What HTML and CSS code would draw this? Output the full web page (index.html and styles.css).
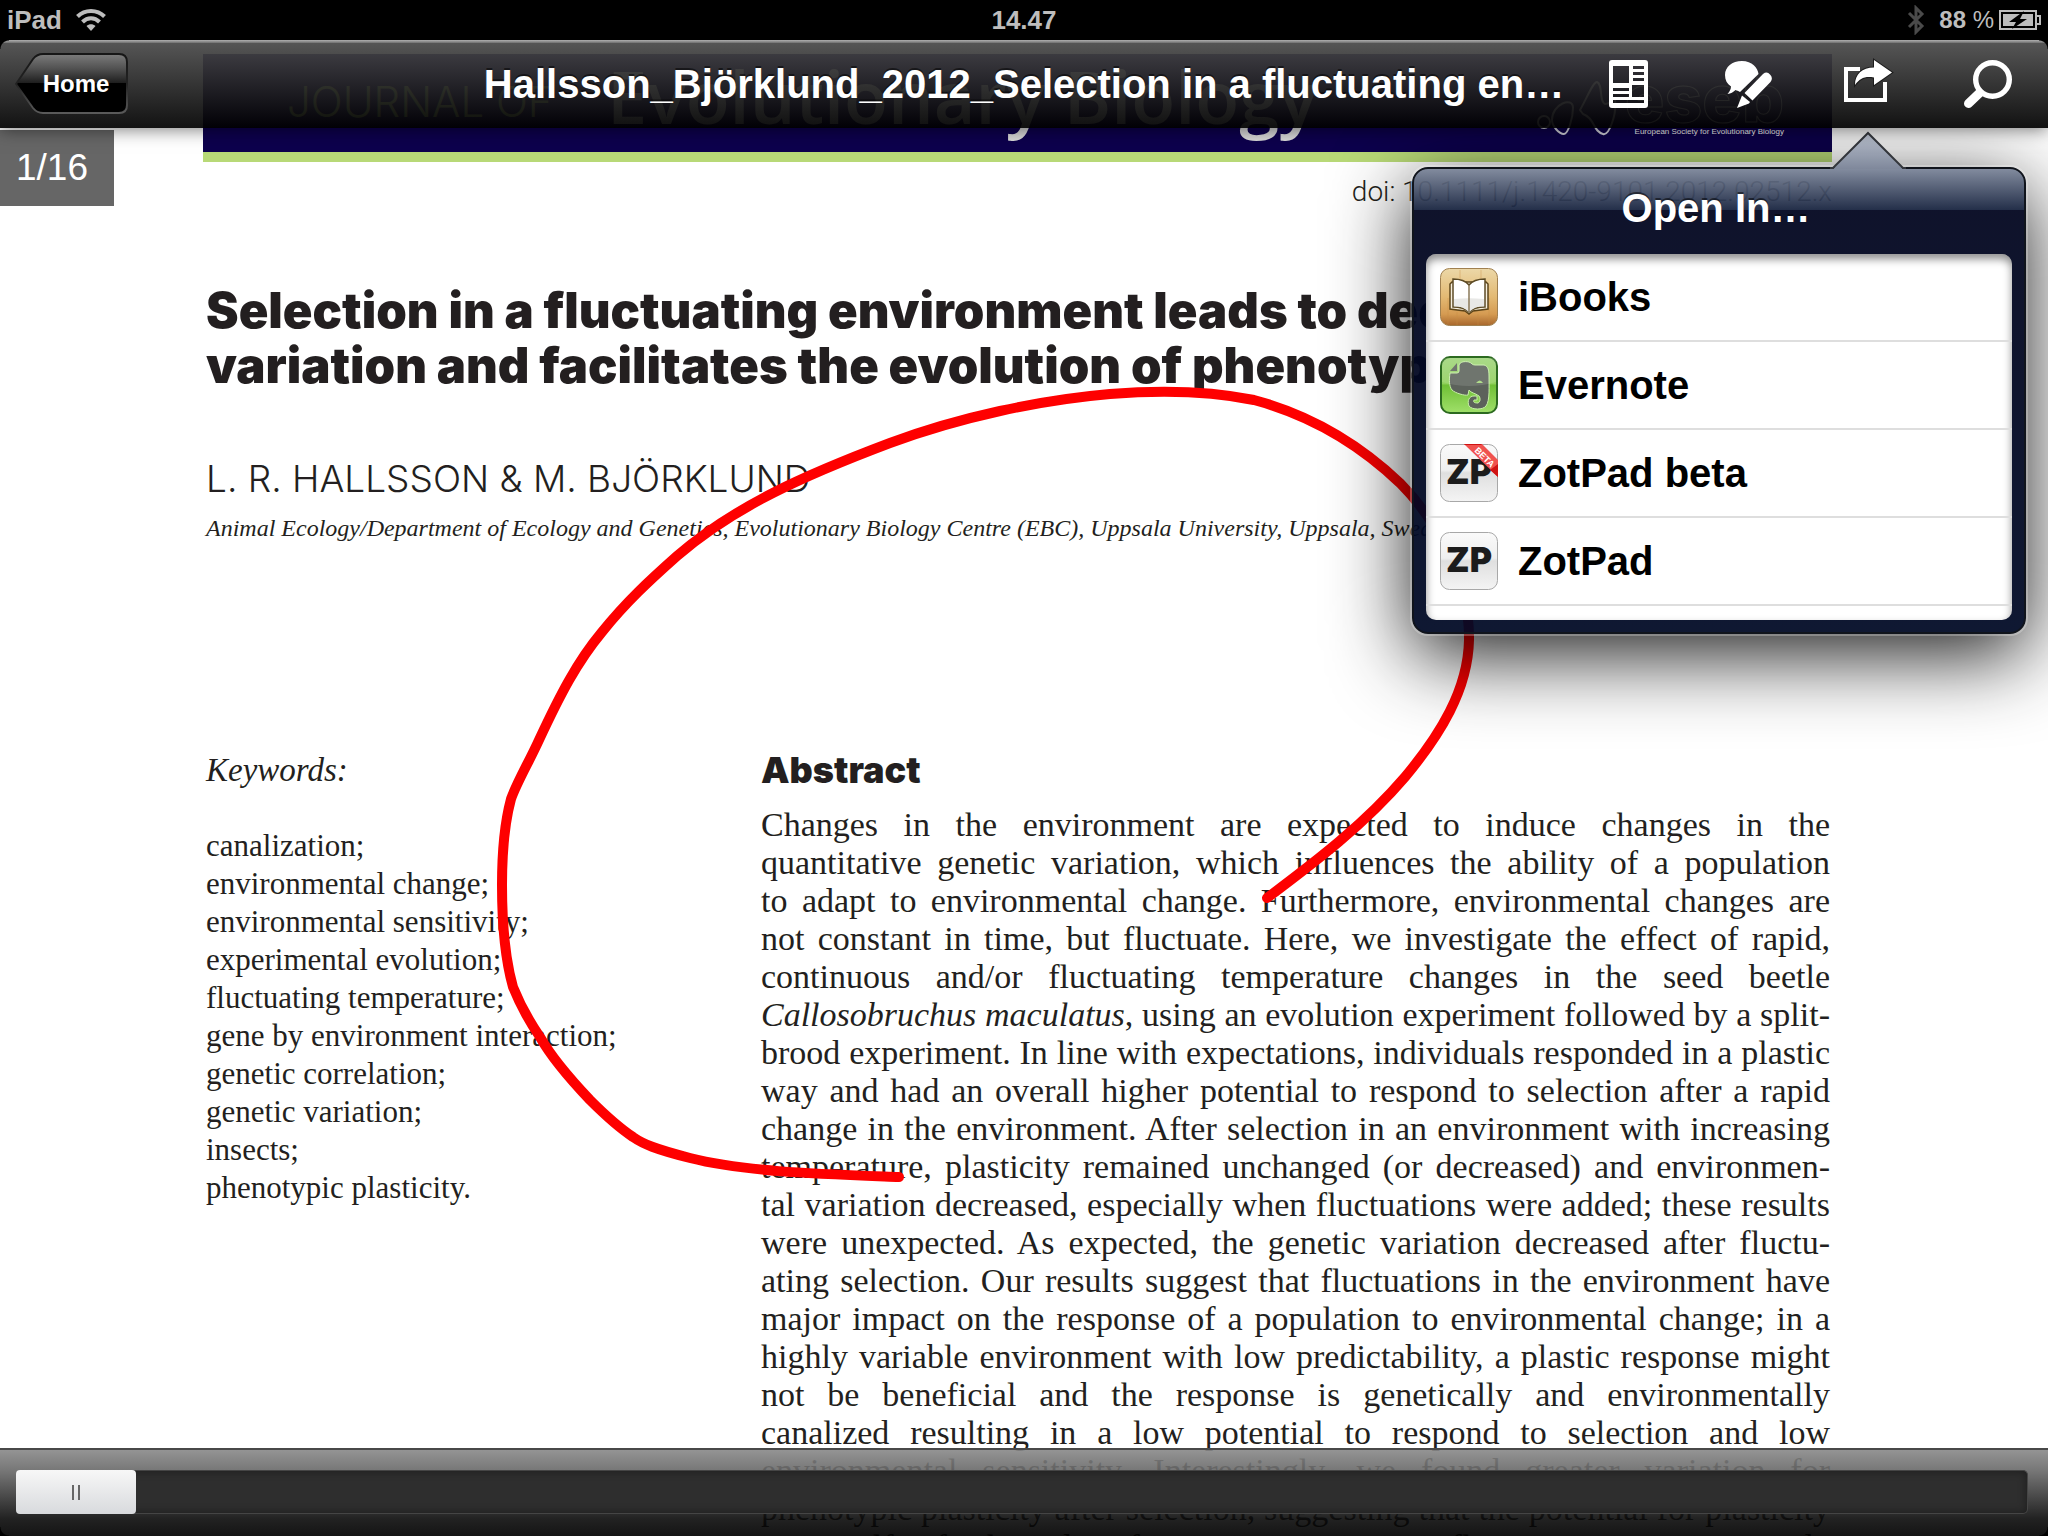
FILE: index.html
```html
<!DOCTYPE html>
<html lang="en">
<head>
<meta charset="utf-8">
<title>Hallsson_Björklund_2012_Selection in a fluctuating environment</title>
<link rel="stylesheet" href="styles.css">
</head>
<body>
<div class="app">

  <main class="document">
    <article class="page">
      <div class="banner">
        <span class="banner-prefix">JOURNAL OF</span>
        <span class="banner-name">Evolutionary Biology</span>
        <div class="society">
          <svg class="society-mark" viewBox="0 0 80 64" aria-hidden="true">
            <g fill="none" stroke="#dcdce6" stroke-width="2">
              <circle cx="7" cy="48" r="6"/>
              <path d="M15 46C15 30 36 22 36 34C36 44 31 60 27 60C22 60 15 52 15 46Z"/>
              <path d="M43 36C50 24 56 8 60 8C66 10 62 28 68 30C74 30 78 22 78 26C80 40 72 62 66 60C56 58 58 44 46 40Z"/>
            </g>
          </svg>
          <div class="society-text">
            <span class="society-acronym">eseb</span>
            <span class="society-name">European Society for Evolutionary Biology</span>
          </div>
        </div>
      </div>

      <p class="doi">doi: 10.1111/j.1420-9101.2012.02512.x</p>

      <h1 class="paper-title">Selection in a fluctuating environment leads to decreased<br>variation and facilitates the evolution of phenotypic</h1>
      <p class="authors">L. R. HALLSSON &amp; M. BJÖRKLUND</p>
      <p class="affiliation">Animal Ecology/Department of Ecology and Genetics, Evolutionary Biology Centre (EBC), Uppsala University, Uppsala, Sweden</p>

      <div class="columns">
        <section>
          <h2 class="keywords-heading">Keywords:</h2>
          <ul class="keywords">
            <li>canalization;</li>
            <li>environmental change;</li>
            <li>environmental sensitivity;</li>
            <li>experimental evolution;</li>
            <li>fluctuating temperature;</li>
            <li>gene by environment interaction;</li>
            <li>genetic correlation;</li>
            <li>genetic variation;</li>
            <li>insects;</li>
            <li>phenotypic plasticity.</li>
          </ul>
        </section>
        <section>
          <h2 class="abstract-heading">Abstract</h2>
          <p class="abstract">
            <span>Changes in the environment are expected to induce changes in the</span>
            <span>quantitative genetic variation, which influences the ability of a population</span>
            <span>to adapt to environmental change. Furthermore, environmental changes are</span>
            <span>not constant in time, but fluctuate. Here, we investigate the effect of rapid,</span>
            <span>continuous and/or fluctuating temperature changes in the seed beetle</span>
            <span><i>Callosobruchus maculatus</i>, using an evolution experiment followed by a split-</span>
            <span>brood experiment. In line with expectations, individuals responded in a plastic</span>
            <span>way and had an overall higher potential to respond to selection after a rapid</span>
            <span>change in the environment. After selection in an environment with increasing</span>
            <span>temperature, plasticity remained unchanged (or decreased) and environmen-</span>
            <span>tal variation decreased, especially when fluctuations were added; these results</span>
            <span>were unexpected. As expected, the genetic variation decreased after fluctu-</span>
            <span>ating selection. Our results suggest that fluctuations in the environment have</span>
            <span>major impact on the response of a population to environmental change; in a</span>
            <span>highly variable environment with low predictability, a plastic response might</span>
            <span>not be beneficial and the response is genetically and environmentally</span>
            <span>canalized resulting in a low potential to respond to selection and low</span>
            <span>environmental sensitivity. Interestingly, we found greater variation for</span>
            <span>phenotypic plasticity after selection, suggesting that the potential for plasticity</span>
            <span>is itself facilitated after exposure to fluctuations. Our study</span>
          </p>
        </section>
      </div>
    </article>

    <svg class="ink" aria-hidden="true">
      <path d="M899 1177C820 1174 745 1172 690 1158C655 1149 643 1144 633 1137C618 1127 604 1114 590 1100C572 1081 553 1060 540 1037C527 1018 519 1002 513 987C504 955 502 920 502 885C502 855 504 825 511 799C517 782 529 762 539 740C560 695 577 662 602 632C626 602 650 580 677 556C735 506 805 475 890 443C960 417 1040 400 1110 394C1160 390 1210 391 1254 400C1310 415 1360 445 1400 483C1435 518 1470 580 1469 640C1468 690 1440 735 1405 777C1365 824 1315 862 1267 898" fill="none" stroke="#fe0000" stroke-width="10" stroke-linecap="round"/>
    </svg>
  </main>

  <div class="page-count">1/16</div>

  <header class="chrome">
    <div class="status">
      <div class="status-side">
        <span>iPad</span>
        <svg width="30" height="24" viewBox="0 0 30 24" aria-hidden="true">
          <g fill="none" stroke="#bdbdbd" stroke-width="4">
            <path d="M1.500 8.500C9 1 21 1 28.500 8.500"/>
            <path d="M6.500 14C11.500 9 18.500 9 23.500 14"/>
          </g>
          <path d="M10.500 18C13 15.500 17 15.500 19.500 18L15 23Z" fill="#bdbdbd"/>
        </svg>
      </div>
      <span>14.47</span>
      <div class="status-side status-right">
        <svg width="18" height="30" viewBox="0 0 18 30" aria-hidden="true">
          <path d="M2 8L15 21L9 27V3L15 9L2 22" fill="none" stroke="#4a4a4a" stroke-width="3"/>
        </svg>
        <span class="charge">88 <span class="percent">%</span></span>
        <svg width="42" height="20" viewBox="0 0 42 20" aria-hidden="true">
          <rect x="1" y="1" width="36" height="18" fill="none" stroke="#bdbdbd" stroke-width="2"/>
          <path d="M38 6H41V14H38" fill="none" stroke="#bdbdbd" stroke-width="2"/>
          <rect x="4" y="4" width="30" height="12" fill="#bdbdbd"/>
          <path d="M25 1L10 12H17L13 19L28 9H21Z" fill="#000"/>
        </svg>
      </div>
    </div>

    <div class="toolbar">
      <div class="toolbar-left">
        <button class="home" type="button">
          <svg class="home-shape" viewBox="0 0 114 64" aria-hidden="true">
            <defs>
              <linearGradient id="homeFill" x1="0" y1="0" x2="0" y2="1">
                <stop offset="0" stop-color="#7c7c7c"/>
                <stop offset=".25" stop-color="#515151"/>
                <stop offset=".5" stop-color="#1c1c1c"/>
                <stop offset=".5" stop-color="#000"/>
                <stop offset="1" stop-color="#000"/>
              </linearGradient>
              <linearGradient id="homeEdge" x1="0" y1="0" x2="0" y2="1">
                <stop offset="0" stop-color="#161616"/>
                <stop offset=".5" stop-color="#222"/>
                <stop offset="1" stop-color="#5a5a5a"/>
              </linearGradient>
            </defs>
            <path d="M1 32L18 7Q22 2 28 2H104Q112 2 112 10V53Q112 61 104 61H28Q22 61 18 56Z" fill="url(#homeFill)" stroke="url(#homeEdge)" stroke-width="2"/>
          </svg>
          <span class="home-label">Home</span>
        </button>
      </div>
      <div class="toolbar-title">Hallsson_Björklund_2012_Selection in a fluctuating en…</div>
      <div class="toolbar-actions">
        <button class="tool" type="button" aria-label="Contents">
          <svg viewBox="0 0 48 48" aria-hidden="true">
            <path fill="#fff" fill-rule="evenodd" d="M8 0H41Q44 0 44 3V45Q44 48 41 48H8Q5 48 5 45V3Q5 0 8 0ZM9 6V23H25V6ZM29 6V9H40V6ZM29 12V15H40V12ZM29 18V21H40V18ZM28 25V37H40V25ZM9 28V31H25V28ZM9 34V37H25V34ZM9 40V43H40V40Z"/>
          </svg>
        </button>
        <button class="tool" type="button" aria-label="Annotate">
          <svg viewBox="0 0 48 48" aria-hidden="true">
            <path fill="#fff" d="M18 1C28 1 34 8 34.500 14L16 32C14 31 13 30.500 11.500 30C9 32.500 7 33.500 3.500 34C6 31 7 29 7 26.500C3 24 1 20 1 15C1 7 8 1 18 1Z"/>
            <path fill="#fff" d="M20.500 33L39 14Q43 11 46 14.500Q49.500 18 46.500 22L28.500 40.500Z"/>
            <path fill="#fff" d="M18 35.500L26 42L25 43.500L13 48L15 43Z"/>
          </svg>
        </button>
        <button class="tool" type="button" aria-label="Share">
          <svg viewBox="0 0 48 48" aria-hidden="true">
            <path fill="none" stroke="#fff" stroke-width="4" d="M16 9H2V40H41V22"/>
            <path fill="#fff" stroke="#1c1c1c" stroke-width="2" paint-order="stroke" d="M30 0L48 12.500L30 25V17.500C21 16 16 18 11 25C11 14 18 7.500 30 7.500Z"/>
          </svg>
        </button>
        <button class="tool" type="button" aria-label="Search">
          <svg viewBox="0 0 48 48" aria-hidden="true">
            <circle cx="28.500" cy="19.500" r="16.800" fill="none" stroke="#fff" stroke-width="5.400"/>
            <path d="M15.500 33L4.500 43.500" stroke="#fff" stroke-width="9" stroke-linecap="round"/>
          </svg>
        </button>
      </div>
    </div>
  </header>

  <aside class="popover" aria-labelledby="popover-title">
    <svg class="popover-arrow" viewBox="0 0 76 38" aria-hidden="true">
      <defs>
        <linearGradient id="arrowFill" x1="0" y1="0" x2="0" y2="1">
          <stop offset="0" stop-color="#b9c0cd"/>
          <stop offset="1" stop-color="#7f889b"/>
        </linearGradient>
      </defs>
      <path d="M3 38L38 2L73 38Z" fill="url(#arrowFill)"/>
      <path d="M0 37H3L38 2L73 37H76" fill="none" stroke="#33363c" stroke-width="2"/>
    </svg>
    <h2 class="popover-title" id="popover-title">Open In…</h2>
    <ul class="apps">
      <li>
        <button class="app-row" type="button">
          <svg class="app-icon" viewBox="0 0 58 58" aria-hidden="true">
            <defs>
              <linearGradient id="wood" x1="0" y1="0" x2="0" y2="1">
                <stop offset="0" stop-color="#ecd8a8"/>
                <stop offset=".5" stop-color="#e3b973"/>
                <stop offset=".8" stop-color="#d59b52"/>
                <stop offset="1" stop-color="#a8672c"/>
              </linearGradient>
            </defs>
            <rect x=".5" y=".5" width="57" height="57" rx="9" fill="url(#wood)" stroke="#a08050"/>
            <path d="M8 30V56M17 44V57M38 46V57M49 30V56M20 2V12M41 2V12" stroke="#c98c42" stroke-opacity=".4"/>
            <path d="M12 14L10 16V41L25 43L29 46L33 43L48 41V16L46 14Z" fill="#f6efdf" stroke="#5c4418" stroke-width="1.500"/>
            <path d="M29 17C25 12 19 11 13 11V39C20 39 25 40 29 44C33 40 38 39 45 39V11C39 11 33 12 29 17Z" fill="#fff" stroke="#5c4a24" stroke-width="1.500"/>
            <path d="M29 44C25 40 20 38 14 38V31C24 30 34 30 44 31V38C38 38 33 40 29 44" fill="#e8e8e6"/>
            <path d="M29 17V44" stroke="#8a7858" stroke-width="1.500"/>
          </svg>
          <span>iBooks</span>
        </button>
      </li>
      <li>
        <button class="app-row" type="button">
          <svg class="app-icon" viewBox="0 0 58 58" aria-hidden="true">
            <defs>
              <linearGradient id="leaf" x1="0" y1="0" x2="0" y2="1">
                <stop offset="0" stop-color="#9fd47a"/>
                <stop offset=".48" stop-color="#8fd05a"/>
                <stop offset=".5" stop-color="#6fbf35"/>
                <stop offset="1" stop-color="#a0e06a"/>
              </linearGradient>
            </defs>
            <rect x="1" y="1" width="56" height="56" rx="9" fill="url(#leaf)" stroke="#2c6a20" stroke-width="2"/>
            <path d="M19 9C20 6 24 5 29 6C32 7 32 9 35 9H44C48 10 49 14 49 20C49 30 50 45 46 50C43 54 32 54 29 50C27 45 29 40 34 40H37V44H34C33 46 34 47 38 47C40 46 41 43 39 40C35 37 31 37 29 34L28 39C25 40 15 37 12 34C9 30 9 24 10 17H17Q19 17 19 15Z" fill="#5c625b" stroke="#c7efa8" stroke-width="1"/>
            <path d="M17 7L10 15H17Z" fill="#5c625b"/>
            <path d="M36 27Q40 22 43 27Z" fill="#a6d97c"/>
            <path d="M2 2H56V26Q29 34 2 26Z" fill="#fff" fill-opacity=".12"/>
          </svg>
          <span>Evernote</span>
        </button>
      </li>
      <li>
        <button class="app-row" type="button">
          <svg class="app-icon" viewBox="0 0 58 58" aria-hidden="true">
            <defs>
              <linearGradient id="silver" x1="0" y1="0" x2="0" y2="1">
                <stop offset="0" stop-color="#fafafa"/>
                <stop offset=".45" stop-color="#efefef"/>
                <stop offset=".5" stop-color="#dfdfdf"/>
                <stop offset="1" stop-color="#f4f4f4"/>
              </linearGradient>
              <clipPath id="tile"><rect width="58" height="58" rx="9"/></clipPath>
            </defs>
            <rect x=".5" y=".5" width="57" height="57" rx="9" fill="url(#silver)" stroke="#a8a8a8"/>
            <text class="zp" x="29" y="40" text-anchor="middle">ZP</text>
            <g clip-path="url(#tile)">
              <path d="M24 0H42L58 16V33Z" fill="#f0524f"/>
              <path d="M24 0H41L42 1H25ZM50 26L58 20V33Z" fill="#d01212"/>
              <text class="beta" transform="translate(34 7) rotate(45)">BETA</text>
            </g>
          </svg>
          <span>ZotPad beta</span>
        </button>
      </li>
      <li>
        <button class="app-row" type="button">
          <svg class="app-icon" viewBox="0 0 58 58" aria-hidden="true">
            <rect x=".5" y=".5" width="57" height="57" rx="9" fill="url(#silver)" stroke="#a8a8a8"/>
            <text class="zp" x="29" y="40" text-anchor="middle">ZP</text>
          </svg>
          <span>ZotPad</span>
        </button>
      </li>
    </ul>
  </aside>

  <footer class="scrubber">
    <input class="scrubber-range" type="range" min="1" max="16" value="1" aria-label="Page">
  </footer>
</div>
</body>
</html>
```

FILE: styles.css
```css
* {
  box-sizing: border-box;
}

body,
h1,
h2,
p,
ul {
  margin: 0;
  padding: 0;
}

ul {
  list-style: none;
}

button {
  margin: 0;
  padding: 0;
  border: 0;
  background: none;
  font: inherit;
  color: inherit;
}

body {
  font-family: "Liberation Sans", Arial, sans-serif;
  background: #fff;
}

.app {
  position: relative;
  height: 100vh;
  overflow: hidden;
}

/* Document */

.document {
  padding: 54px 216px 0 203px;
  color: #231f20;
  background: #fff;
}

.banner {
  display: flex;
  align-items: flex-end;
  height: 108px;
  padding-left: 84px;
  background: #0d004d;
  border-bottom: 10px solid #b8d977;
  white-space: nowrap;
}

.banner-prefix {
  width: 320px;
  padding-bottom: 18px;
  font-family: Inter, sans-serif;
  font-size: 42px;
  font-weight: 300;
  line-height: 64px;
  color: #a9c76e;
}

.banner-name {
  flex: 1;
  align-self: flex-start;
  font-family: "Open Sans", sans-serif;
  font-size: 72px;
  font-weight: 600;
  line-height: 84px;
  color: #d8d8d8;
}

.society {
  display: flex;
  align-items: flex-end;
  gap: 8px;
  padding-right: 48px;
  padding-bottom: 14px;
}

.society-mark {
  width: 80px;
  height: 64px;
}

.society-text {
  display: flex;
  flex-direction: column;
  align-items: flex-end;
}

.society-acronym {
  font-family: Inter, sans-serif;
  font-size: 66px;
  font-weight: 800;
  line-height: 56px;
  color: transparent;
  -webkit-text-stroke: 1px #dcdce6;
}

.society-name {
  font-family: "Liberation Sans", sans-serif;
  font-size: 8px;
  line-height: 12px;
  color: #fff;
}

.doi {
  margin-top: 14px;
  font-family: Roboto, sans-serif;
  font-size: 28px;
  font-weight: 300;
  line-height: 32px;
  text-align: right;
}

.paper-title {
  margin: 75px 0 0 3px;
  font-family: Inter, sans-serif;
  font-size: 49px;
  font-weight: 900;
  line-height: 55px;
  white-space: nowrap;
}

.authors {
  margin: 66px 0 0 3px;
  font-family: Inter, sans-serif;
  font-size: 37px;
  font-weight: 300;
  line-height: 40px;
}

.affiliation {
  margin: 14px 0 0 3px;
  font-family: "Liberation Serif", serif;
  font-size: 24px;
  font-style: italic;
  line-height: 30px;
  white-space: nowrap;
}

.columns {
  display: grid;
  grid-template-columns: 555px 1fr;
  margin: 207px 2px 0 3px;
  font-family: "Liberation Serif", serif;
}

.keywords-heading {
  font-size: 33px;
  font-weight: 400;
  font-style: italic;
  line-height: 40px;
}

.keywords {
  margin-top: 37px;
  font-size: 31px;
  line-height: 38px;
}

.abstract-heading {
  font-family: Inter, sans-serif;
  font-size: 36px;
  font-weight: 900;
  line-height: 40px;
}

.abstract {
  margin-top: 16px;
  font-size: 34px;
  line-height: 38px;
}

.abstract > span {
  display: block;
  white-space: nowrap;
  text-align: justify;
  text-align-last: justify;
}

.ink {
  position: absolute;
  top: 0;
  left: 0;
  width: 100%;
  height: 100%;
  pointer-events: none;
}

.page-count {
  position: absolute;
  top: 130px;
  left: 0;
  width: 114px;
  padding-left: 16px;
  background: #666;
  color: #fff;
  font-size: 37px;
  line-height: 76px;
}

/* Status bar and toolbar */

.chrome {
  position: absolute;
  top: 0;
  left: 0;
  right: 0;
  z-index: 2;
}

.status {
  display: grid;
  grid-template-columns: 1fr auto 1fr;
  align-items: center;
  height: 40px;
  padding: 0 7px;
  background: #000;
  color: #bdbdbd;
  font-size: 26px;
  font-weight: 700;
  line-height: 38px;
}

.status-side {
  display: flex;
  align-items: center;
  gap: 14px;
}

.status-right {
  justify-content: flex-end;
}

.charge {
  margin-right: -9px;
  font-size: 24px;
}

.percent {
  font-weight: 400;
}

.toolbar {
  display: grid;
  grid-template-columns: 1fr auto 1fr;
  align-items: center;
  height: 88px;
  background:
    radial-gradient(circle at 9px 9px, transparent 8px, #000 9px) 0 0 / 9px 9px no-repeat,
    radial-gradient(circle at 0 9px, transparent 8px, #000 9px) 100% 0 / 9px 9px no-repeat,
    linear-gradient(#b0b0b0, #707070) 0 0 / 100% 3px no-repeat,
    linear-gradient(rgba(75, 75, 75, .93), rgba(0, 0, 0, .93));
  box-shadow: 0 2px 16px rgba(0, 0, 0, .5);
  color: #fff;
  font-weight: 700;
}

.toolbar-left {
  padding-left: 15px;
}

.home {
  position: relative;
  display: block;
  width: 114px;
  height: 64px;
  padding-left: 8px;
  font-size: 24px;
  line-height: 64px;
  text-align: center;
}

.home-shape {
  position: absolute;
  inset: 0;
}

.home-label {
  position: relative;
}

.toolbar-title {
  font-size: 40px;
  line-height: 88px;
  white-space: nowrap;
  text-shadow: 0 -2px 0 rgba(0, 0, 0, .5);
}

.toolbar-actions {
  display: flex;
  justify-content: flex-end;
}

.tool {
  display: grid;
  place-items: center;
  width: 120px;
  height: 88px;
}

.tool svg {
  width: 48px;
  height: 48px;
  overflow: visible;
}

/* Open In popover */

.popover {
  position: absolute;
  top: 167px;
  right: 22px;
  z-index: 1;
  width: 614px;
  padding: 0 12px 12px;
  border: 2px solid #10141c;
  border-radius: 16px;
  background:
    linear-gradient(rgba(122, 132, 152, .94), rgba(22, 34, 62, .94)) 0 0 / 100% 41px no-repeat,
    linear-gradient(rgba(0, 4, 30, .94), rgba(0, 10, 38, .94)) 0 41px no-repeat;
  box-shadow:
    0 0 0 2px rgba(255, 255, 255, .25),
    0 20px 80px rgba(0, 0, 0, .9);
}

.popover-arrow {
  position: absolute;
  top: -38px;
  right: 118px;
  width: 76px;
  height: 38px;
}

.popover-title {
  height: 85px;
  padding-right: 6px;
  color: #fff;
  font-size: 40px;
  line-height: 78px;
  text-align: center;
  text-shadow: 0 -2px 0 rgba(0, 0, 0, .5);
}

.apps {
  height: 366px;
  overflow: hidden;
  border-radius: 10px;
  background: #fff;
  box-shadow: inset 0 5px 8px rgba(0, 0, 0, .45);
}

.app-row {
  display: flex;
  align-items: center;
  gap: 20px;
  width: 100%;
  height: 88px;
  padding: 0 14px;
  border-bottom: 2px solid #dedede;
  color: #000;
  font-size: 40px;
  font-weight: 700;
}

.app-icon {
  width: 58px;
  height: 58px;
}

.zp {
  font-family: Inter, sans-serif;
  font-size: 34px;
  font-weight: 900;
  fill: #1c1c1c;
}

.beta {
  font-family: "Liberation Sans", sans-serif;
  font-size: 9px;
  font-weight: 700;
  fill: #fff;
}

/* Page scrubber */

.scrubber {
  position: absolute;
  left: 0;
  right: 0;
  bottom: 0;
  z-index: 2;
  height: 88px;
  padding: 22px 20px 0 16px;
  border-top: 2px solid #484848;
  background:
    radial-gradient(circle at 9px 0, transparent 8px, #000 9px) 0 100% / 9px 9px no-repeat,
    radial-gradient(circle at 0 0, transparent 8px, #000 9px) 100% 100% / 9px 9px no-repeat,
    linear-gradient(rgba(136, 136, 136, .9), rgba(104, 104, 104, .9) 24%, rgba(10, 10, 10, .9) 80%, rgba(0, 0, 0, .92));
}

.scrubber-range {
  appearance: none;
  display: block;
  width: 100%;
  height: 44px;
  margin: -2px 0 0;
  border: 1px solid #454545;
  border-width: 1px 1px 1px 0;
  border-radius: 5px;
  background: #2e2e2e;
  box-shadow: inset 0 0 10px rgba(0, 0, 0, .4);
}

.scrubber-range::-webkit-slider-thumb {
  appearance: none;
  width: 120px;
  height: 44px;
  border-radius: 4px;
  background:
    linear-gradient(#666, #666) 56px 15px / 2px 15px no-repeat,
    linear-gradient(#666, #666) 62px 15px / 2px 15px no-repeat,
    linear-gradient(#f7f7f7, #d8dadd);
}
```
